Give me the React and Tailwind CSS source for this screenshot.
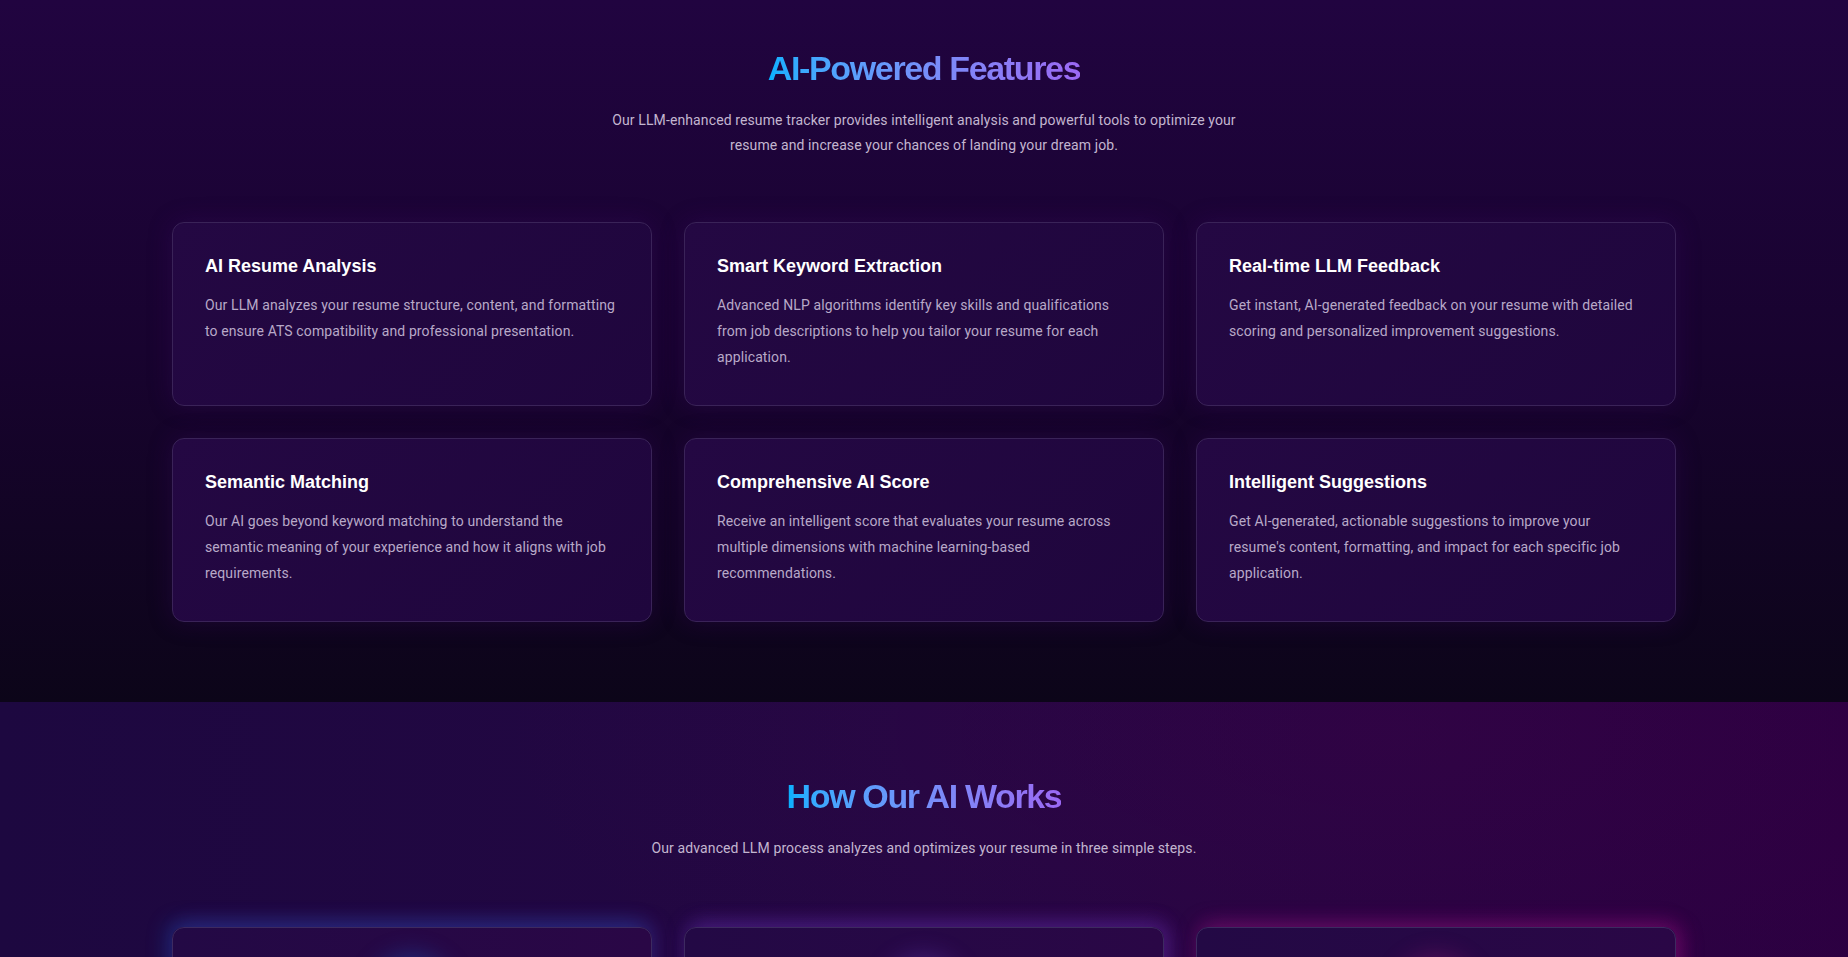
import { Upload, Brain, Sparkles } from "lucide-react";

const features = [
  {
    title: "AI Resume Analysis",
    text: "Our LLM analyzes your resume structure, content, and formatting to ensure ATS compatibility and professional presentation.",
  },
  {
    title: "Smart Keyword Extraction",
    text: "Advanced NLP algorithms identify key skills and qualifications from job descriptions to help you tailor your resume for each application.",
  },
  {
    title: "Real-time LLM Feedback",
    text: "Get instant, AI-generated feedback on your resume with detailed scoring and personalized improvement suggestions.",
  },
  {
    title: "Semantic Matching",
    text: "Our AI goes beyond keyword matching to understand the semantic meaning of your experience and how it aligns with job requirements.",
  },
  {
    title: "Comprehensive AI Score",
    text: "Receive an intelligent score that evaluates your resume across multiple dimensions with machine learning-based recommendations.",
  },
  {
    title: "Intelligent Suggestions",
    text: "Get AI-generated, actionable suggestions to improve your resume's content, formatting, and impact for each specific job application.",
  },
];

const steps = [
  {
    Icon: Upload,
    title: "Upload Your Resume",
    text: "Upload your resume and the job description you are targeting. Our system parses every section instantly.",
    card: "shadow-[-6px_-6px_20px_rgba(20,110,230,0.25),6px_-6px_20px_rgba(110,60,210,0.18)]",
    circle: "bg-linear-to-br from-[#0ea5e9] to-[#2563eb] shadow-[0_0_26px_8px_rgba(20,120,240,0.35)]",
  },
  {
    Icon: Brain,
    title: "LLM Analysis",
    text: "Our language model evaluates structure, keywords and semantic relevance against the role requirements.",
    card: "shadow-[0_-6px_20px_rgba(120,60,220,0.22),8px_-4px_20px_rgba(140,60,220,0.22)]",
    circle: "bg-linear-to-br from-[#8b5cf6] to-[#6d28d9] shadow-[0_0_26px_8px_rgba(130,80,240,0.3)]",
  },
  {
    Icon: Sparkles,
    title: "Get Recommendations",
    text: "Receive a detailed score and actionable suggestions to optimize your resume for every application.",
    card: "shadow-[0_-6px_20px_rgba(170,20,140,0.25),8px_-2px_20px_rgba(190,20,150,0.25)]",
    circle: "bg-linear-to-br from-[#db2777] to-[#a21caf] shadow-[0_0_26px_8px_rgba(200,30,140,0.3)]",
  },
];

export default function App() {
  return (
    <div className="min-h-screen font-['Roboto',sans-serif] text-white bg-[#0d0520]">
      <section className="bg-[linear-gradient(to_bottom,#210440_0%,#18032f_50%,#0c0519_100%)] pt-12 pb-20">
        <div className="mx-auto max-w-[1536px] px-4">
          <h2 className="mb-5 text-center font-['Liberation_Sans',Arial,sans-serif] text-[34px] leading-[40px] font-bold tracking-[-0.04em]">
            <span className="inline-block bg-linear-to-r from-[#00b0ff] to-[#9a68f3] bg-clip-text text-transparent">
              AI-Powered Features
            </span>
          </h2>
          <p className="mx-auto mb-16 max-w-[650px] text-center text-[14px] leading-[25px] tracking-[0.008em] text-[#c3b6d0]">
            Our LLM-enhanced resume tracker provides intelligent analysis and powerful tools to optimize your resume and increase your chances of landing your dream job.
          </p>
          <div className="grid grid-cols-3 gap-8">
            {features.map((f) => (
              <div
                key={f.title}
                className="rounded-xl border border-[#3a2358] bg-[linear-gradient(135deg,#240843,#1f063d)] px-8 pt-[29px] pb-[35px] shadow-[0_0_24px_rgba(70,10,120,0.25)]"
              >
                <h3 className="mb-3 font-['Liberation_Sans',Arial,sans-serif] text-lg leading-7 font-bold text-white">
                  {f.title}
                </h3>
                <p className="text-[14px] leading-[26px] tracking-[0.008em] text-[#b8a9c8]">{f.text}</p>
              </div>
            ))}
          </div>
        </div>
      </section>

      <section className="bg-[radial-gradient(ellipse_at_75%_5%,rgba(90,0,80,0.16),transparent_45%),linear-gradient(to_right,#1d0840,#240743_50%,#2b0041)] pt-[74px] pb-24">
        <div className="mx-auto max-w-[1536px] px-4">
          <h2 className="mb-[19px] text-center font-['Liberation_Sans',Arial,sans-serif] text-[34px] leading-[40px] font-bold tracking-[-0.04em]">
            <span className="inline-block bg-linear-to-r from-[#00b0ff] to-[#9a68f3] bg-clip-text text-transparent">
              How Our AI Works
            </span>
          </h2>
          <p className="mb-[66px] text-center text-[14px] leading-[26px] tracking-[0.008em] text-[#c3b6d0]">
            Our advanced LLM process analyzes and optimizes your resume in three simple steps.
          </p>
          <div className="grid grid-cols-3 gap-8">
            {steps.map((s) => (
              <div
                key={s.title}
                className={`flex flex-col items-center rounded-xl border border-[#3d2a60] bg-[linear-gradient(90deg,#230945,#2a0746)] px-8 pt-9 pb-9 text-center ${s.card}`}
              >
                <div className={`mb-6 flex h-16 w-16 items-center justify-center rounded-full ${s.circle}`}>
                  <s.Icon className="h-7 w-7 text-white" />
                </div>
                <h3 className="mb-3 font-['Liberation_Sans',Arial,sans-serif] text-lg leading-7 font-bold">{s.title}</h3>
                <p className="text-[14px] leading-[26px] text-[#b8a9c8]">{s.text}</p>
              </div>
            ))}
          </div>
        </div>
      </section>
    </div>
  );
}
